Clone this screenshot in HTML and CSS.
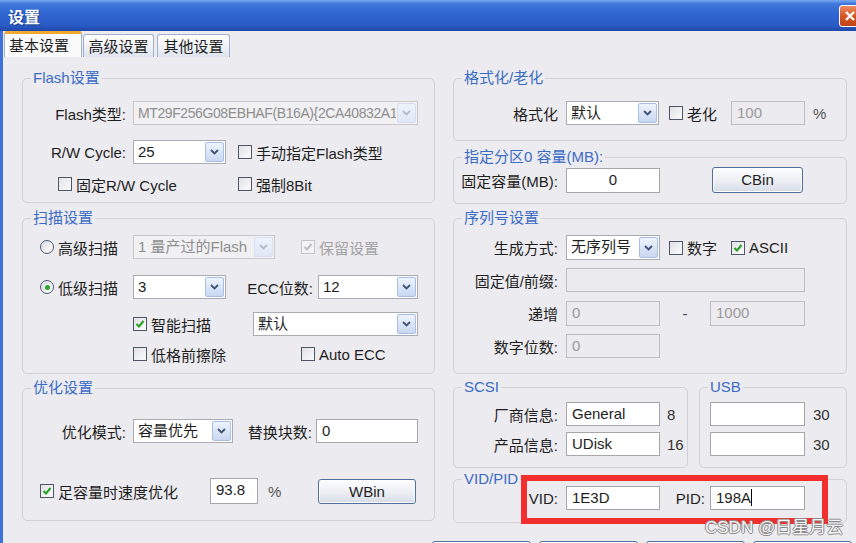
FILE: index.html
```html
<!DOCTYPE html>
<html lang="zh">
<head>
    <meta charset="UTF-8">
    <title>设置</title>
    <link rel="stylesheet" href="styles.css">
</head>
<body>
    <div class="titlebar">
        <span class="title">设置</span>
        <span class="close"><svg viewBox="0 0 12 12" width="12" height="12"><path d="M2 2l8 8M10 2l-8 8" stroke="#fff" stroke-width="2.4"/></svg></span>
    </div>

    <div class="window">
        <div class="tabs">
            <div class="tab active">基本设置</div>
            <div class="tab">高级设置</div>
            <div class="tab tab-last">其他设置</div>
        </div>

        <div class="page">
            <!-- left column -->
            <div class="col col-left">
                <div class="group g-flash">
                    <span class="legend">Flash设置</span>
                    <div class="row mt14">
                        <span class="lbl lbl-l">Flash类型:</span>
                        <div class="combo off w285"><span class="val narrow">MT29F256G08EBHAF(B16A){2CA40832A1</span><span class="drop"><svg viewBox="0 0 9 6" width="9" height="6"><path d="M1 1l3.5 3.5L8 1"/></svg></span></div>
                    </div>
                    <div class="row mt15">
                        <span class="lbl lbl-l">R/W Cycle:</span>
                        <div class="combo w93"><span class="val">25</span><span class="drop"><svg viewBox="0 0 9 6" width="9" height="6"><path d="M1 1l3.5 3.5L8 1"/></svg></span></div>
                        <label class="chk ml12"><span class="cb"></span>手动指定Flash类型</label>
                    </div>
                    <div class="row short mt11 pl35">
                        <label class="chk w180"><span class="cb"></span>固定R/W Cycle</label>
                        <label class="chk"><span class="cb"></span>强制8Bit</label>
                    </div>
                </div>

                <div class="group g-scan">
                    <span class="legend">扫描设置</span>
                    <div class="row mt8 pl17">
                        <label class="radio w93"><span class="rb"></span>高级扫描</label>
                        <div class="combo off w142"><span class="val">1 量产过的Flash</span><span class="drop"><svg viewBox="0 0 9 6" width="9" height="6"><path d="M1 1l3.5 3.5L8 1"/></svg></span></div>
                        <label class="chk off ml26"><span class="cb"><svg viewBox="0 0 10 10" width="10" height="10"><path d="M1.5 5l2.5 2.5L8.5 2"/></svg></span>保留设置</label>
                    </div>
                    <div class="row mt16 pl17">
                        <label class="radio w93"><span class="rb on"></span>低级扫描</label>
                        <div class="combo w93"><span class="val">3</span><span class="drop"><svg viewBox="0 0 9 6" width="9" height="6"><path d="M1 1l3.5 3.5L8 1"/></svg></span></div>
                        <span class="lbl lbl-ecc">ECC位数:</span>
                        <div class="combo w100"><span class="val">12</span><span class="drop"><svg viewBox="0 0 9 6" width="9" height="6"><path d="M1 1l3.5 3.5L8 1"/></svg></span></div>
                    </div>
                    <div class="row mt13 pl110">
                        <label class="chk w120"><span class="cb"><svg viewBox="0 0 10 10" width="10" height="10"><path d="M1.5 5l2.5 2.5L8.5 2"/></svg></span>智能扫描</label>
                        <div class="combo w165"><span class="val">默认</span><span class="drop"><svg viewBox="0 0 9 6" width="9" height="6"><path d="M1 1l3.5 3.5L8 1"/></svg></span></div>
                    </div>
                    <div class="row short mt9 pl110">
                        <label class="chk w168"><span class="cb"></span>低格前擦除</label>
                        <label class="chk"><span class="cb"></span>Auto ECC</label>
                    </div>
                </div>

                <div class="group g-opt">
                    <span class="legend">优化设置</span>
                    <div class="row mt22">
                        <span class="lbl lbl-l">优化模式:</span>
                        <div class="combo w100"><span class="val">容量优先</span><span class="drop"><svg viewBox="0 0 9 6" width="9" height="6"><path d="M1 1l3.5 3.5L8 1"/></svg></span></div>
                        <span class="lbl lbl-rep">替换块数:</span>
                        <div class="box w102">0</div>
                    </div>
                    <div class="row tall mt35 pl17">
                        <label class="chk w170"><span class="cb"><svg viewBox="0 0 10 10" width="10" height="10"><path d="M1.5 5l2.5 2.5L8.5 2"/></svg></span>足容量时速度优化</label>
                        <div class="box w48 h26">93.8</div>
                        <span class="unit w60">%</span>
                        <div class="btn w98">WBin</div>
                    </div>
                </div>
            </div>

            <!-- right column -->
            <div class="col col-right">
                <div class="group g-fmt">
                    <span class="legend">格式化/老化</span>
                    <div class="row mt14">
                        <span class="lbl lbl-r">格式化</span>
                        <div class="combo w93"><span class="val">默认</span><span class="drop"><svg viewBox="0 0 9 6" width="9" height="6"><path d="M1 1l3.5 3.5L8 1"/></svg></span></div>
                        <label class="chk ml10 w62"><span class="cb"></span>老化</label>
                        <div class="box off w74">100</div>
                        <span class="unit ml8">%</span>
                    </div>
                </div>

                <div class="group g-part">
                    <span class="legend">指定分区0 容量(MB):</span>
                    <div class="row tall mt1">
                        <span class="lbl lbl-r">固定容量(MB):</span>
                        <div class="box center w94 h25">0</div>
                        <div class="btn w91 h26 ml52">CBin</div>
                    </div>
                </div>

                <div class="group g-sn">
                    <span class="legend">序列号设置</span>
                    <div class="row mid mt8">
                        <span class="lbl lbl-r">生成方式:</span>
                        <div class="combo w94 h25"><span class="val">无序列号</span><span class="drop"><svg viewBox="0 0 9 6" width="9" height="6"><path d="M1 1l3.5 3.5L8 1"/></svg></span></div>
                        <label class="chk ml9 w62"><span class="cb"></span>数字</label>
                        <label class="chk"><span class="cb"><svg viewBox="0 0 10 10" width="10" height="10"><path d="M1.5 5l2.5 2.5L8.5 2"/></svg></span>ASCII</label>
                    </div>
                    <div class="row mt8">
                        <span class="lbl lbl-r">固定值/前缀:</span>
                        <div class="box off w239"></div>
                    </div>
                    <div class="row mid mt9">
                        <span class="lbl lbl-r">递增</span>
                        <div class="box off w94 h25">0</div>
                        <span class="dash">-</span>
                        <div class="box off w95 h25">1000</div>
                    </div>
                    <div class="row mt8">
                        <span class="lbl lbl-r">数字位数:</span>
                        <div class="box off w94">0</div>
                    </div>
                </div>

                <div class="pair">
                    <div class="group g-scsi">
                        <span class="legend">SCSI</span>
                        <div class="row mt6">
                            <span class="lbl lbl-r">厂商信息:</span>
                            <div class="box w94">General</div>
                            <span class="count">8</span>
                        </div>
                        <div class="row mt6">
                            <span class="lbl lbl-r">产品信息:</span>
                            <div class="box w94">UDisk</div>
                            <span class="count">16</span>
                        </div>
                    </div>
                    <div class="group g-usb">
                        <span class="legend">USB</span>
                        <div class="row mt6 pl10">
                            <div class="box w95"></div>
                            <span class="count ml8">30</span>
                        </div>
                        <div class="row mt6 pl10">
                            <div class="box w95"></div>
                            <span class="count ml8">30</span>
                        </div>
                    </div>
                </div>

                <div class="group g-vid">
                    <span class="legend">VID/PID</span>
                    <div class="row mtn2">
                        <span class="lbl lbl-r">VID:</span>
                        <div class="box w94">1E3D</div>
                        <span class="lbl lbl-pid">PID:</span>
                        <div class="box w95">198A<span class="caret"></span></div>
                    </div>
                    <div class="mark"></div>
                </div>
            </div>
        </div>

        <!-- dialog buttons, only their top edge is in view -->
        <div class="buttons">
            <div class="btn w99"></div>
            <div class="btn w99"></div>
            <div class="btn w99"></div>
            <div class="btn w99"></div>
        </div>
    </div>

    <div class="watermark">CSDN @日星月云</div>
</body>
</html>
```

FILE: styles.css
```css
* {
    box-sizing: border-box;
}
body {
    margin: 0;
    width: 856px;
    height: 543px;
    overflow: hidden;
    position: relative;
    background-color: #ecebef;
    font-family: "Liberation Sans", "Noto Sans CJK SC", sans-serif;
    font-size: 15px;
    color: #1e1e1e;
}

/* title bar */
.titlebar {
    height: 31px;
    display: flex;
    align-items: center;
    padding-left: 8px;
    background: linear-gradient(#78aaf0 0, #3f78dc 12%, #2f65d0 45%, #2b5cc6 80%, #1f47aa 100%);
}
.title {
    color: #fff;
    font-weight: bold;
    font-size: 16px;
    text-shadow: 1px 1px 0 #1a3c8c;
}
.close {
    margin-left: auto;
    margin-right: -5px;
    width: 22px;
    height: 22px;
    border: 1px solid #fff;
    border-radius: 3px;
    background: linear-gradient(#ec8a62, #d4521f 55%, #c0421a);
    display: flex;
    align-items: center;
    justify-content: center;
}

.window {
    height: 512px;
    border-left: 3px solid #3d72d8;
}

/* tabs */
.tabs {
    display: flex;
    height: 26px;
    padding-left: 1px;
}
.tab {
    width: 71px;
    height: 23px;
    margin-top: 3px;
    margin-left: 1px;
    padding-top: 2px;
    border: 1px solid #9fb1cc;
    border-bottom: none;
    border-radius: 3px 3px 0 0;
    background: linear-gradient(#ffffff, #eef0f5 60%, #dde3ee);
    text-align: center;
    line-height: 20px;
}
.tab.active {
    width: 78px;
    height: 26px;
    margin: 0;
    padding: 0 0 0 4px;
    border-color: #a5b4c4;
    border-top: 3px solid #f0a830;
    background: #fbfbfc;
    text-align: left;
    line-height: 23px;
}
.tab-last {
    width: 73px;
    margin-left: 3px;
}

/* columns */
.page {
    display: flex;
    padding: 21px 0 0 19px;
}
.col-left {
    width: 413px;
}
.col-right {
    width: 394px;
    margin-left: 18px;
}

/* group boxes */
.group {
    border: 1px solid #d3d1d7;
    border-radius: 5px;
}
.legend {
    display: block;
    width: max-content;
    height: 18px;
    line-height: 18px;
    margin: -10px 0 0 8px;
    padding: 0 2px;
    background-color: #ecebef;
    color: #3b6cc5;
}
.g-flash { height: 125px; }
.g-scan { height: 156px; margin-top: 15px; }
.g-opt { height: 133px; margin-top: 14px; }
.g-fmt { height: 63px; }
.g-part { height: 47px; margin-top: 16px; }
.g-sn { height: 156px; margin-top: 14px; }
.pair {
    display: flex;
    margin-top: 13px;
}
.g-scsi { width: 235px; height: 81px; }
.g-usb { width: 148px; height: 81px; margin-left: 11px; }
.g-vid {
    height: 44px;
    margin-top: 11px;
    position: relative;
}

/* rows */
.row {
    display: flex;
    align-items: center;
    height: 24px;
    white-space: nowrap;
}
.row.short { height: 18px; }
.row.mid { height: 25px; }
.row.tall { height: 26px; }

.mtn2 { margin-top: -2px; }
.mt1 { margin-top: 1px; }
.mt6 { margin-top: 6px; }
.mt8 { margin-top: 8px; }
.mt9 { margin-top: 9px; }
.mt11 { margin-top: 11px; }
.mt13 { margin-top: 13px; }
.mt14 { margin-top: 14px; }
.mt15 { margin-top: 15px; }
.mt16 { margin-top: 16px; }
.mt22 { margin-top: 22px; }
.mt35 { margin-top: 35px; }
.pl10 { padding-left: 10px; }
.pl17 { padding-left: 17px; }
.pl35 { padding-left: 35px; }
.pl110 { padding-left: 110px; }
.ml8 { margin-left: 8px; }
.ml9 { margin-left: 9px; }
.ml10 { margin-left: 10px; }
.ml12 { margin-left: 12px; }
.ml26 { margin-left: 26px; }
.ml52 { margin-left: 52px; }

.w48 { width: 48px; }
.w60 { width: 60px; }
.w62 { width: 62px; }
.w74 { width: 74px; }
.w91 { width: 91px; }
.w93 { width: 93px; }
.w94 { width: 94px; }
.w95 { width: 95px; }
.w98 { width: 98px; }
.w99 { width: 99px; }
.w100 { width: 100px; }
.w102 { width: 102px; }
.w120 { width: 120px; }
.w142 { width: 142px; }
.w165 { width: 165px; }
.w168 { width: 168px; }
.w170 { width: 170px; }
.w180 { width: 180px; }
.w239 { width: 239px; }
.w285 { width: 285px; }
.h25 { height: 25px !important; }
.h26 { height: 26px !important; }

/* labels */
.lbl {
    text-align: right;
    flex-shrink: 0;
}
.lbl-l { width: 103px; margin-right: 7px; }
.lbl-r { width: 104px; margin-right: 8px; }
.lbl-ecc { width: 87px; margin-right: 5px; }
.lbl-rep { width: 79px; margin-right: 4px; }
.lbl-pid { width: 45px; margin-right: 5px; }

/* combo boxes */
.combo {
    display: flex;
    height: 24px;
    flex-shrink: 0;
    border: 1px solid #a9adb3;
    background-color: #fff;
}
.combo .val {
    flex: 1;
    overflow: hidden;
    padding-left: 4px;
    line-height: 22px;
}
.combo .val.narrow {
    font-size: 14px;
    letter-spacing: -0.4px;
}
.combo .drop {
    width: 19px;
    margin: 1px;
    flex-shrink: 0;
    border: 1px solid #a9bfe3;
    border-radius: 2px;
    background: linear-gradient(#eef4fd, #c8d7f1);
    display: flex;
    align-items: center;
    justify-content: center;
}
.combo .drop path {
    fill: none;
    stroke: #3f5273;
    stroke-width: 1.8;
}
.combo.off {
    border-color: #c9c9cc;
    background-color: #f1f0f3;
    color: #8e8e8e;
}
.combo.off .drop {
    border-color: #d6e0f0;
    background: linear-gradient(#eef3fb, #dfe8f7);
}
.combo.off .drop path {
    stroke: #b3bccb;
}

/* text boxes */
.box {
    height: 24px;
    flex-shrink: 0;
    border: 1px solid #a7a7a9;
    background-color: #fff;
    padding-left: 5px;
    line-height: 22px;
}
.box.center {
    text-align: center;
    padding-left: 0;
}
.box.off {
    border-color: #bdbdbf;
    background-color: #ecebef;
    color: #9a9a9a;
}
.caret {
    display: inline-block;
    width: 1px;
    height: 17px;
    vertical-align: -3px;
    background-color: #000;
}

/* check boxes and radios */
.chk,
.radio {
    display: flex;
    align-items: center;
    flex-shrink: 0;
}
.cb {
    width: 14px;
    height: 14px;
    margin-right: 4px;
    border: 1px solid #4d5767;
    background: linear-gradient(135deg, #e2e2e6, #fbfbfc);
    display: flex;
    align-items: center;
    justify-content: center;
}
.cb path {
    fill: none;
    stroke: #21a121;
    stroke-width: 2;
}
.chk.off {
    color: #a3a3a3;
}
.chk.off .cb {
    border-color: #c4c4c6;
    background: #f4f4f6;
}
.chk.off .cb path {
    stroke: #bdbdbd;
}
.rb {
    width: 14px;
    height: 14px;
    margin-right: 4px;
    border: 1px solid #4a5a72;
    border-radius: 50%;
    background: linear-gradient(135deg, #dcdce2, #ffffff);
    display: flex;
    align-items: center;
    justify-content: center;
}
.rb.on::after {
    content: "";
    width: 5px;
    height: 5px;
    border-radius: 50%;
    background-color: #2ea52e;
}

.unit {
    color: #555;
    padding-left: 10px;
    flex-shrink: 0;
}
.unit.ml8 {
    padding-left: 0;
}
.dash {
    width: 50px;
    text-align: center;
    color: #444;
}
.count {
    margin-left: 7px;
    color: #333;
}
.count.ml8 {
    margin-left: 8px;
}

/* buttons */
.btn {
    height: 25px;
    flex-shrink: 0;
    border: 1px solid #506e9e;
    border-radius: 3px;
    background: linear-gradient(#fdfdfe, #eceef3 55%, #d5dbe6);
    box-shadow: inset 0 0 0 1px #ffffff;
    text-align: center;
    line-height: 23px;
}

.buttons {
    display: flex;
    justify-content: flex-end;
    gap: 8px;
    margin-top: 18px;
    padding-right: 4px;
}

/* annotation over the vid/pid row */
.mark {
    position: absolute;
    left: 67px;
    top: -5px;
    width: 307px;
    height: 49px;
    border: 6px solid #f22e2e;
}
.watermark {
    position: absolute;
    left: 705px;
    top: 513px;
    font-size: 17px;
    color: #f4f4f4;
    text-shadow: 1px 0 #8c8c8c, -1px 0 #8c8c8c, 0 1px #8c8c8c, 0 -1px #8c8c8c;
}
```
